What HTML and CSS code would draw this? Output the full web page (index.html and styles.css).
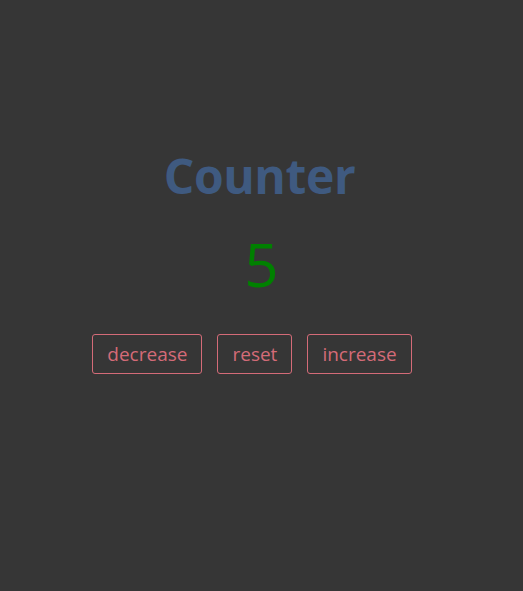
FILE: index.html
```html
<!DOCTYPE html>
<html lang="en">
<head>
<meta charset="utf-8">
<title>Counter</title>
<link rel="stylesheet" href="styles.css">
</head>
<body>
<main class="app">
  <h1 class="title">Counter</h1>
  <div class="value">5</div>
  <div class="buttons">
    <button class="btn">decrease</button>
    <button class="btn">reset</button>
    <button class="btn">increase</button>
  </div>
</main>
</body>
</html>
```

FILE: styles.css
```css
html, body {
  margin: 0;
  padding: 0;
  height: 100%;
  background: #363636;
}
body {
  font-family: "Open Sans", "Noto Sans", sans-serif;
}
.app {
  display: flex;
  flex-direction: column;
  align-items: center;
  padding-top: 146px;
}
.title {
  margin: 0 0 0 -4px;
  font-size: 48px;
  font-weight: 700;
  line-height: 60px;
  color: #3f5a80;
  letter-spacing: -0.4px;
}
.value {
  margin-top: 26px;
  font-size: 60px;
  font-weight: 400;
  line-height: 64px;
  color: #008000;
}
.buttons {
  display: flex;
  gap: 15px;
  margin-top: 38px;
  margin-right: 19px;
}
.btn {
  font-family: inherit;
  font-size: 19px;
  color: #d46b78;
  background: transparent;
  border: 1px solid #d46b78;
  border-radius: 3px;
  height: 40px;
  padding: 0 14px;
  cursor: pointer;
}
```
